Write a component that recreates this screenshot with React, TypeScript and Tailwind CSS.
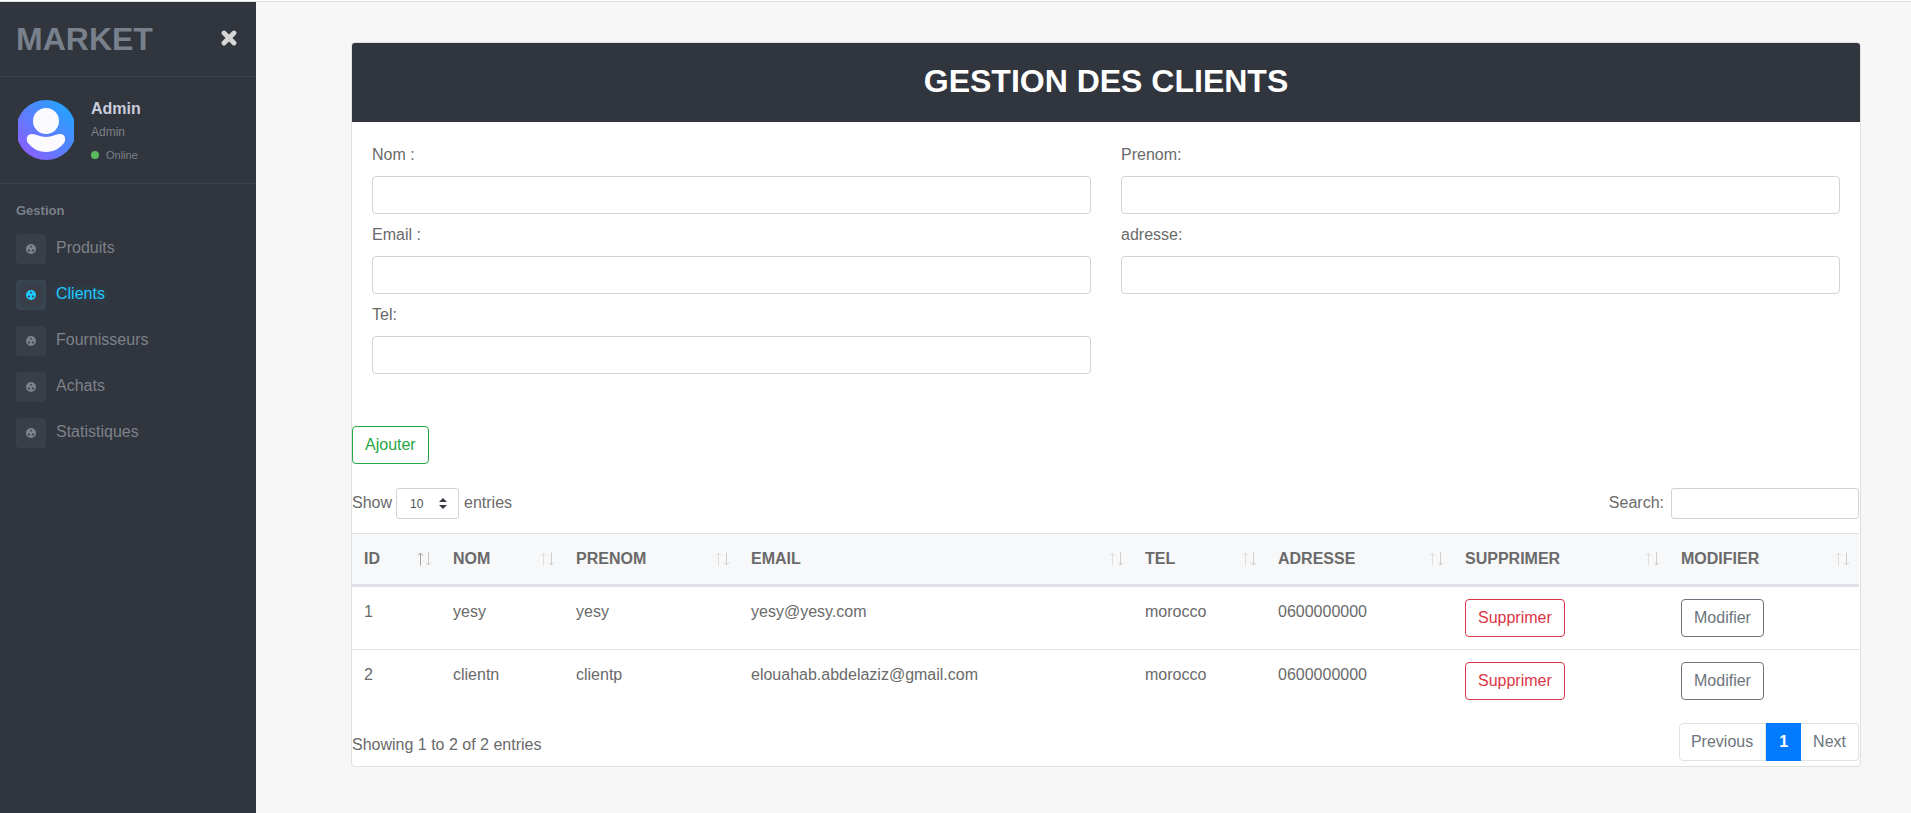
import React from 'react';

const navItems = ['Produits', 'Clients', 'Fournisseurs', 'Achats', 'Statistiques'];

const columns = [
  { label: 'ID', width: 'w-[89px]', active: true },
  { label: 'NOM', width: 'w-[123px]' },
  { label: 'PRENOM', width: 'w-[175px]' },
  { label: 'EMAIL', width: 'w-[394px]' },
  { label: 'TEL', width: 'w-[133px]' },
  { label: 'ADRESSE', width: 'w-[187px]' },
  { label: 'SUPPRIMER', width: 'w-[216px]' },
  { label: 'MODIFIER', width: 'w-[190px]' },
];

const clients = [
  { id: 1, nom: 'yesy', prenom: 'yesy', email: 'yesy@yesy.com', tel: 'morocco', adresse: '0600000000' },
  { id: 2, nom: 'clientn', prenom: 'clientp', email: 'elouahab.abdelaziz@gmail.com', tel: 'morocco', adresse: '0600000000' },
];

function NavGlyph() {
  return (
    <svg width="10" height="10" viewBox="0 0 10 10" fill="currentColor">
      <path fillRule="evenodd" d="M5 0a5 5 0 1 1 0 10A5 5 0 0 1 5 0ZM5 1.8a.9.9 0 1 0 0 1.8.9.9 0 0 0 0-1.8ZM3 5.4a1.1 1.1 0 1 0 0 2.2 1.1 1.1 0 0 0 0-2.2Zm4 0a1.1 1.1 0 1 0 0 2.2 1.1 1.1 0 0 0 0-2.2Z" />
    </svg>
  );
}

function Avatar() {
  return (
    <svg width="56" height="60" viewBox="0 0 56 60" className="shrink-0">
      <defs>
        <linearGradient id="avatarGrad" x1="1" y1="0" x2="0" y2="1">
          <stop offset="0" stopColor="#14aeff" />
          <stop offset="1" stopColor="#9a55ff" />
        </linearGradient>
      </defs>
      <circle cx="28" cy="30" r="30" fill="url(#avatarGrad)" />
      <circle cx="28" cy="21" r="13" fill="#fbfbff" />
      <path d="M14 34C18 34 22 37 28 37C34 37 38 34 42 34C47 34 48.5 39 46 43C42 48 36 52 28 52C20 52 14 48 10 43C7.5 39 9 34 14 34Z" fill="#fbfbff" />
    </svg>
  );
}

function SortArrows({ active }: { active?: boolean }) {
  return (
    <svg width="15" height="14" viewBox="0 0 15 14" fill="none" strokeWidth="1" className="shrink-0">
      <path d="M3.5 13.5V1M1 3.5 3.5 1 6 3.5" stroke={active ? '#a8a299' : '#dedede'} />
      <path d="M11.5 0.5V13M9 10.5 11.5 13 14 10.5" stroke={active ? '#c8c8c8' : '#cdcdcd'} />
    </svg>
  );
}

function Field({ label }: { label: string }) {
  return (
    <div>
      <label className="block h-[24px] mb-[9px] leading-[24px]">{label}</label>
      <input className="block w-full h-[38px] border border-[#ced4da] rounded-[4px] bg-white" />
    </div>
  );
}

export default function App() {
  return (
    <div className="flex flex-col h-[813px] overflow-hidden bg-[#f7f7f7] text-[16px] text-[#6a6a6a] font-['Liberation_Sans',Arial,sans-serif]">
      <div className="h-[2px] bg-white border-b border-[#ddd] shrink-0" />
      <div className="flex flex-1 min-h-0">
        <aside className="w-[256px] shrink-0 bg-[#31353d]">
          <div className="h-[75px] flex items-center justify-between pl-[16px] pr-[19px] border-b border-[#3d4149]">
            <span className="text-[32px] font-bold text-[#78808c]">MARKET</span>
            <svg width="16" height="16" viewBox="0 0 16 16" stroke="#d6d6d6" strokeWidth="4.8" strokeLinecap="round" className="-mt-[2px]">
              <path d="M3 3 13 13M13 3 3 13" />
            </svg>
          </div>
          <div className="h-[107px] flex items-center pl-[18px] gap-[17px] border-b border-[#3d4149]">
            <Avatar />
            <div className="pt-[4px]">
              <div className="text-[16px] font-bold leading-[22px] text-[#c8ccdc]">Admin</div>
              <div className="text-[12px] leading-[22px] mt-[1px] text-[#7d818a]">Admin</div>
              <div className="flex items-center gap-[7px] mt-[1px] text-[11px] leading-[22px] text-[#7d818a]">
                <span className="w-[8px] h-[8px] rounded-full bg-[#5cb85c]" />
                Online
              </div>
            </div>
          </div>
          <div className="pt-[17px] px-[16px]">
            <div className="text-[13px] font-bold leading-[20px] text-[#78808c] mb-[13px]">Gestion</div>
            <nav className="flex flex-col gap-[16px]">
              {navItems.map((item) => {
                const active = item === 'Clients';
                return (
                  <div key={item} className={active ? 'flex items-center gap-[10px] text-[#1fc8ff]' : 'flex items-center gap-[10px] text-[#7d818a]'}>
                    <span className={active ? 'w-[30px] h-[30px] flex items-center justify-center rounded-[4px] bg-[#3a3f48] shadow-[inset_0_0_8px_rgba(31,200,255,0.12)]' : 'w-[30px] h-[30px] flex items-center justify-center rounded-[4px] bg-[#3a3e47]'}>
                      <NavGlyph />
                    </span>
                    <span className={active ? 'leading-[24px] -mt-[2px] [text-shadow:0_0_8px_rgba(31,200,255,0.35)]' : 'leading-[24px] -mt-[2px]'}>{item}</span>
                  </div>
                );
              })}
            </nav>
          </div>
        </aside>

        <main className="flex-1 min-w-0 pl-[95px] pr-[50px] pt-[40px]">
          <div className="bg-white border border-[#dfdfdf] rounded-[4px] h-[725px] overflow-hidden">
            <h1 className="h-[79px] pb-[4px] flex items-center justify-center bg-[#31353d] text-white text-[32px] font-bold">GESTION DES CLIENTS</h1>
            <div className="px-[20px] pt-[21px] grid grid-cols-[719px_719px] gap-x-[30px] gap-y-[9px] content-start h-[304px]">
              <Field label="Nom :" />
              <Field label="Prenom:" />
              <Field label="Email :" />
              <Field label="adresse:" />
              <Field label="Tel:" />
            </div>
            <button className="block h-[38px] px-[12px] border border-[#28a745] rounded-[4px] text-[#28a745]">Ajouter</button>
            <div className="flex items-center justify-between h-[31px] mt-[24px] mb-[14px] pr-[1px]">
              <div className="flex items-center gap-[4px]">
                <span className="-mt-[2px]">Show</span>
                <span className="w-[63px] h-[31px] flex items-center justify-between pl-[13px] pr-[11px] border border-[#ced4da] rounded-[3px] text-[12px] text-[#495057]">
                  10
                  <svg width="8" height="11" viewBox="0 0 8 11" fill="#343a40">
                    <path d="M4 0 8 4H0ZM4 11 0 7h8Z" />
                  </svg>
                </span>
                <span className="ml-[1px] -mt-[2px]">entries</span>
              </div>
              <div className="flex items-center gap-[7px]">
                <span className="-mt-[2px]">Search:</span>
                <input className="w-[188px] h-[31px] border border-[#ced4da] rounded-[3px]" />
              </div>
            </div>
            <table className="table-fixed w-[1507px] border-collapse">
              <thead>
                <tr className="bg-[#f7f8fa]">
                  {columns.map((col) => (
                    <th key={col.label} className={`${col.width} h-[52px] p-0 pl-[12px] pr-[9px] border-t border-b-[3px] border-[#dee2e6] text-left font-bold`}>
                      <div className="flex items-center justify-between -mt-[1px]">
                        <span>{col.label}</span>
                        <SortArrows active={col.active} />
                      </div>
                    </th>
                  ))}
                </tr>
              </thead>
              <tbody>
                {clients.map((c, i) => (
                  <tr key={c.id} className={i === 0 ? 'border-b border-[#dee2e6]' : ''}>
                    <td className="px-[12px] pt-[13px] pb-[15px] h-[62px] align-top">{c.id}</td>
                    <td className="px-[12px] pt-[13px] pb-[15px] align-top">{c.nom}</td>
                    <td className="px-[12px] pt-[13px] pb-[15px] align-top">{c.prenom}</td>
                    <td className="px-[12px] pt-[13px] pb-[15px] align-top">{c.email}</td>
                    <td className="px-[12px] pt-[13px] pb-[15px] align-top">{c.tel}</td>
                    <td className="px-[12px] pt-[13px] pb-[15px] align-top">{c.adresse}</td>
                    <td className="px-[12px] py-[12px] align-top">
                      <button className="h-[38px] px-[12px] border border-[#dc3545] rounded-[4px] text-[#dc3545]">Supprimer</button>
                    </td>
                    <td className="px-[12px] py-[12px] align-top">
                      <button className="h-[38px] px-[12px] border border-[#6c757d] rounded-[4px] text-[#6c757d]">Modifier</button>
                    </td>
                  </tr>
                ))}
              </tbody>
            </table>
            <div className="flex items-center justify-between pr-[1px] mt-[11px]">
              <span className="mt-[5px]">Showing 1 to 2 of 2 entries</span>
              <div className="flex h-[38px] text-[#6c757d]">
                <span className="pl-[11px] pr-[12px] leading-[36px] border border-[#dee2e6] rounded-l-[4px]">Previous</span>
                <span className="px-[13px] leading-[38px] bg-[#007bff] text-white font-bold">1</span>
                <span className="px-[12px] leading-[36px] border border-[#dee2e6] border-l-0 rounded-r-[4px]">Next</span>
              </div>
            </div>
          </div>
        </main>
      </div>
    </div>
  );
}
